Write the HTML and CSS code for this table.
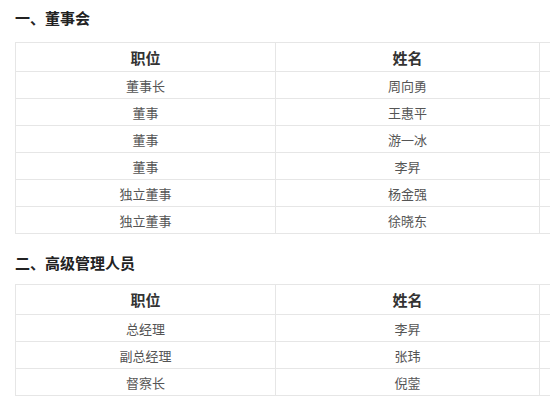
FILE: index.html
```html
<!DOCTYPE html>
<html lang="zh">
<head>
<meta charset="utf-8">
<link rel="stylesheet" href="styles.css">
</head>
<body>
<div class="page">
  <h2 class="sec sec-first">一、董事会</h2>
  <div class="clip">
    <table class="tbl">
      <colgroup><col class="c1"><col class="c2"><col class="c3"></colgroup>
      <thead><tr><th>职位</th><th>姓名</th><th></th></tr></thead>
      <tbody>
        <tr><td>董事长</td><td>周向勇</td><td></td></tr>
        <tr><td>董事</td><td>王惠平</td><td></td></tr>
        <tr><td>董事</td><td>游一冰</td><td></td></tr>
        <tr><td>董事</td><td>李昇</td><td></td></tr>
        <tr><td>独立董事</td><td>杨金强</td><td></td></tr>
        <tr><td>独立董事</td><td>徐晓东</td><td></td></tr>
      </tbody>
    </table>
  </div>
  <h2 class="sec sec-second">二、高级管理人员</h2>
  <div class="clip">
    <table class="tbl tbl2">
      <colgroup><col class="c1"><col class="c2"><col class="c3"></colgroup>
      <thead><tr><th>职位</th><th>姓名</th><th></th></tr></thead>
      <tbody>
        <tr><td>总经理</td><td>李昇</td><td></td></tr>
        <tr><td>副总经理</td><td>张玮</td><td></td></tr>
        <tr><td>督察长</td><td>倪蓥</td><td></td></tr>
      </tbody>
    </table>
  </div>
</div>
</body>
</html>
```
FILE: styles.css
```css
html, body {
  margin: 0;
  padding: 0;
  background: #ffffff;
}
body {
  font-family: "Noto Sans CJK SC", "Noto Sans", sans-serif;
  color: #555555;
}
.page {
  padding: 0 0 0 15px;
  width: 535px;
  overflow: hidden;
}
.clip {
  width: 535px;
  overflow: hidden;
}
.sec {
  font-size: 15px;
  font-weight: bold;
  line-height: 22px;
  color: #222222;
  margin: 0;
}
.sec-first {
  margin-top: 7px;
  margin-bottom: 13px;
}
.sec-second {
  margin-top: 18px;
  margin-bottom: 10px;
}
.tbl {
  border-collapse: collapse;
  table-layout: fixed;
  width: 800px;
}
.c1 { width: 260px; }
.c2 { width: 264px; }
.c3 { width: 276px; }
.tbl th, .tbl td {
  border: 1px solid #e6e6e6;
  text-align: center;
  padding: 0;
}
.tbl th {
  height: 28px;
  font-size: 15px;
  font-weight: bold;
  color: #333333;
}
.tbl td {
  height: 26px;
  font-size: 13px;
  color: #555555;
}
.tbl2 th {
  height: 29px;
}
```
